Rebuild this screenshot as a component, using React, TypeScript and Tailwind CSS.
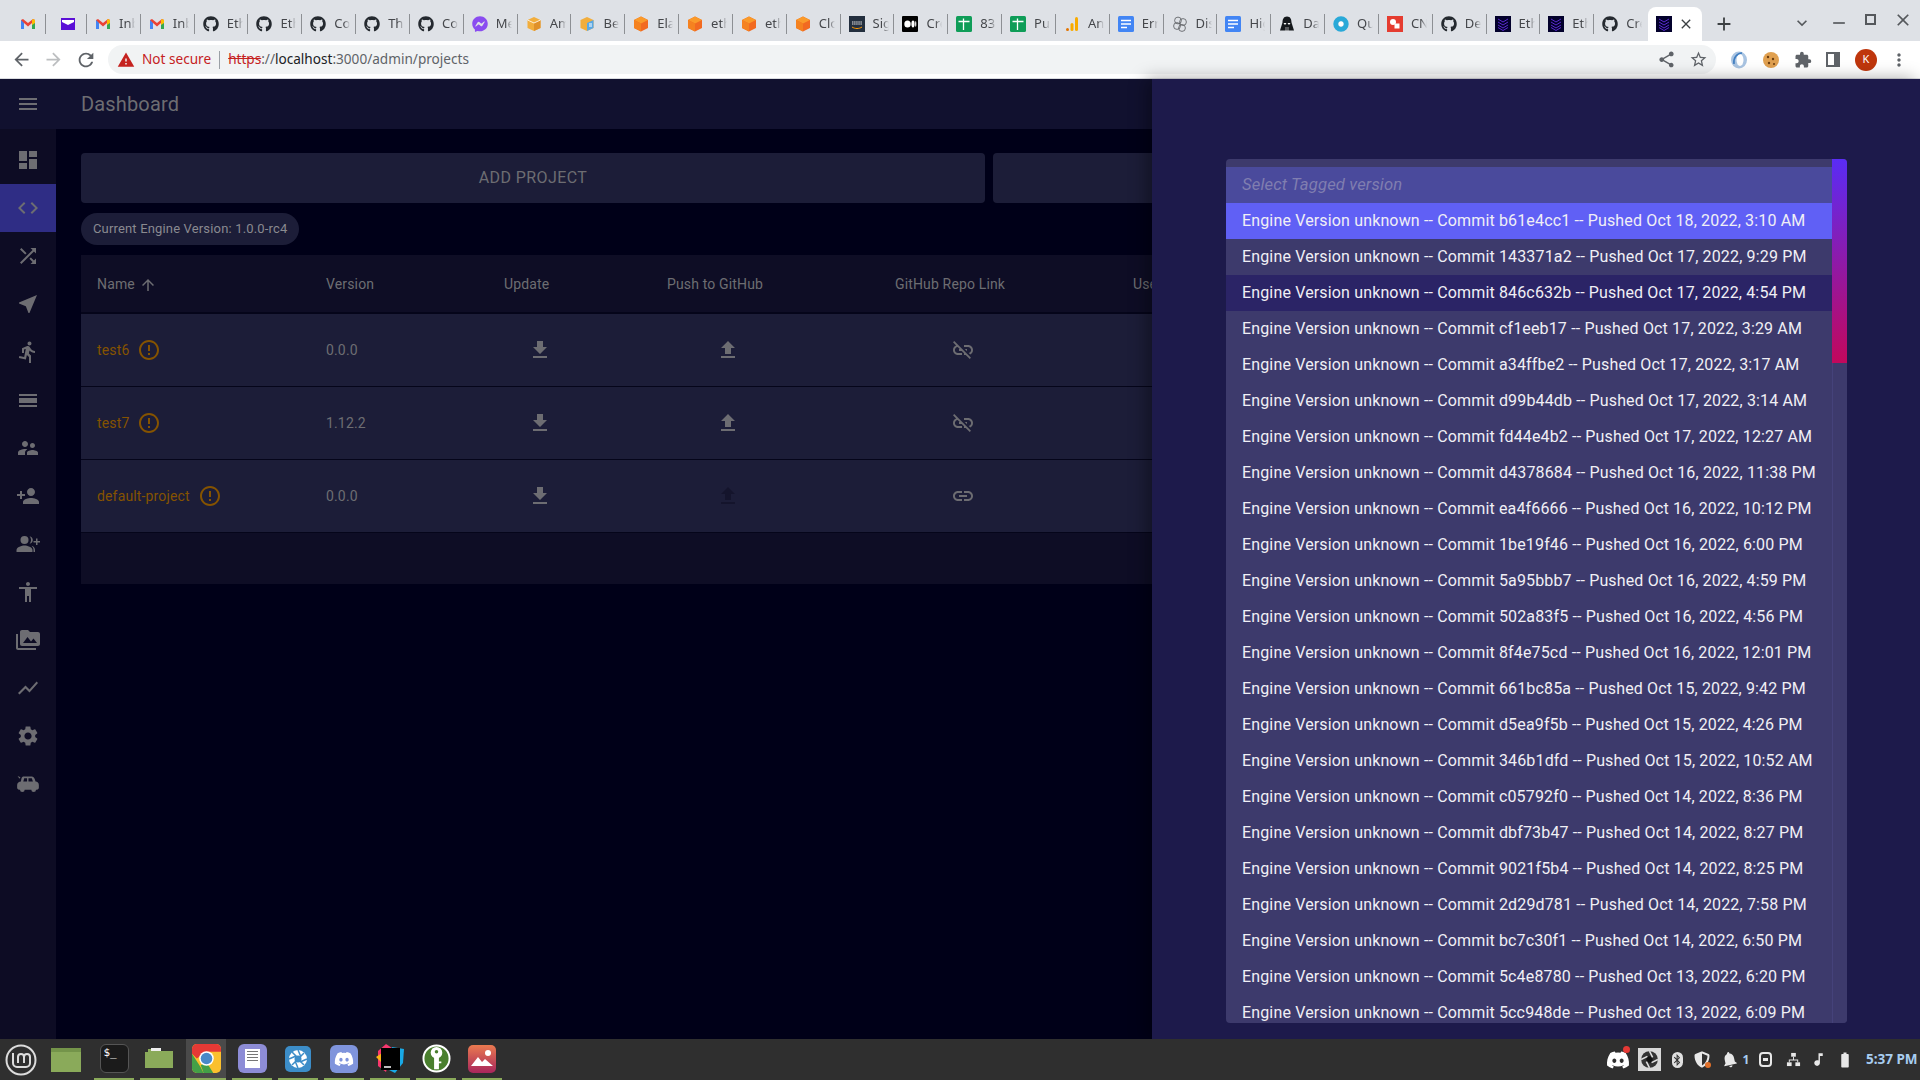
import React from 'react'
import {
  MdAccessibility, MdArrowBack, MdArrowForward, MdArrowUpward, MdCalendarViewDay, MdClose, MdCode, MdDashboard,
  MdDirectionsRun, MdErrorOutline, MdExpandMore, MdExtension, MdFileDownload, MdFileUpload, MdLink,
  MdLinkOff, MdMenu, MdMoreVert, MdNearMe, MdPermMedia, MdPersonAdd, MdRefresh, MdSettings, MdShare, MdShowChart,
  MdShuffle, MdStarBorder, MdSupervisorAccount, MdAdd, MdRemove, MdWarning, MdMusicNote, MdBatteryFull,
  MdNotifications,
} from 'react-icons/md'
import { FaBluetoothB, FaDiscord, FaGithub, FaFacebookMessenger, FaShieldAlt } from 'react-icons/fa'

function Gmail() {
  return (
    <svg viewBox="0 0 16 16" className="w-4 h-4 shrink-0">
      <path d="M1 13V4l2 -1 5 4 5 -4 2 1v9h-3V7L8 10.5 4 7v6z" fill="#ea4335" />
      <path d="M1 13V4l3 3v6z" fill="#4285f4" />
      <path d="M15 13V4l-3 3v6z" fill="#34a853" />
      <path d="M13 3l2 1v3l-3 2V4z" fill="#fbbc04" />
    </svg>
  )
}

function PurpleMail() {
  return (
    <svg viewBox="0 0 16 16" className="w-4 h-4 shrink-0">
      <rect x="1" y="2" width="14" height="12" fill="#5b0fd6" />
      <path d="M2 4h12v2l-6 3-6-3z" fill="#fff" />
    </svg>
  )
}

function Github() {
  return <FaGithub className="w-4 h-4 shrink-0 text-[#24292f]" />
}

function Messenger() {
  return <FaFacebookMessenger className="w-4 h-4 shrink-0 text-[#8a4cf0]" />
}

function AmazonBox() {
  return (
    <svg viewBox="0 0 16 16" className="w-4 h-4 shrink-0">
      <path d="M8 1l6.5 3v8L8 15l-6.5-3V4z" fill="#f2ae3d" />
      <path d="M8 7v8l6.5-3V4z" fill="#e0912a" />
      <path d="M1.5 4L8 7l6.5-3" fill="none" stroke="#fff" strokeWidth="0.8" />
    </svg>
  )
}

function BeBox() {
  return (
    <svg viewBox="0 0 16 16" className="w-4 h-4 shrink-0">
      <path d="M8 1l6.5 3v8L8 15l-6.5-3V4z" fill="#f2ae3d" />
      <path d="M8 7v8l6.5-3V4z" fill="#5aa9e6" />
      <path d="M10 8h3M10 10h3" stroke="#fff" strokeWidth="1" />
    </svg>
  )
}

function OrangeCube() {
  return (
    <svg viewBox="0 0 16 16" className="w-4 h-4 shrink-0">
      <path d="M8 0.5l7 3.5v8l-7 3.5L1 12V4z" fill="#f26a21" />
      <path d="M1 4l7-3.5L15 4 8 7.5z" fill="#fa9a2a" />
      <path d="M8 7.5v8L1 12V4z" fill="#f58220" />
    </svg>
  )
}

function Aws() {
  return (
    <svg viewBox="0 0 16 16" className="w-4 h-4 shrink-0">
      <rect width="16" height="16" fill="#232f3e" />
      <path d="M3 6h10M3 8h10" stroke="#e8e8e8" strokeWidth="1" strokeDasharray="1.5 0.6" />
      <path d="M3 11c3 2 7 2 10 0" stroke="#f90" strokeWidth="1" fill="none" />
    </svg>
  )
}

function Medium() {
  return (
    <svg viewBox="0 0 16 16" className="w-4 h-4 shrink-0">
      <rect width="16" height="16" rx="1" fill="#000" />
      <ellipse cx="5.5" cy="8" rx="3.2" ry="3.6" fill="#fff" />
      <ellipse cx="11" cy="8" rx="1.6" ry="3.4" fill="#fff" />
      <ellipse cx="13.7" cy="8" rx="0.6" ry="3" fill="#fff" />
    </svg>
  )
}

function Sheets() {
  return (
    <svg viewBox="0 0 16 16" className="w-4 h-4 shrink-0">
      <rect width="16" height="16" rx="1.5" fill="#0f9d58" />
      <path d="M2.5 5.5h11M7.5 2.500v11.500" stroke="#fff" strokeWidth="1.3" />
    </svg>
  )
}

function Analytics() {
  return (
    <svg viewBox="0 0 16 16" className="w-4 h-4 shrink-0">
      <rect x="11" y="1" width="3" height="14" rx="1.5" fill="#f9ab00" />
      <rect x="6.5" y="7" width="3" height="8" rx="1.5" fill="#f9ab00" />
      <circle cx="3.5" cy="13.5" r="1.5" fill="#e37400" />
    </svg>
  )
}

function Docs() {
  return (
    <svg viewBox="0 0 16 16" className="w-4 h-4 shrink-0">
      <rect width="16" height="16" rx="1.5" fill="#4285f4" />
      <path d="M3 4.5h10M3 8h10M3 11.5h6" stroke="#fff" strokeWidth="1.4" />
    </svg>
  )
}

function Circles() {
  return (
    <svg viewBox="0 0 16 16" className="w-4 h-4 shrink-0" fill="none" stroke="#55585c" strokeWidth="0.8">
      <circle cx="6" cy="4.5" r="3.4" />
      <circle cx="11" cy="6" r="3.4" />
      <circle cx="5" cy="10" r="3.4" />
      <circle cx="10" cy="12" r="3.4" />
    </svg>
  )
}

function Vader() {
  return (
    <svg viewBox="0 0 16 16" className="w-4 h-4 shrink-0">
      <path d="M8 0.5c3.5 0 4.5 3 4.5 6L15 14.5H1L3.500 6.500C3.500 3.500 4.500 0.500 8 0.500z" fill="#15181c" />
      <path d="M4.500 7h3L6 9zM11.500 7h-3L10 9z" fill="#fff" />
      <path d="M6 12h4M6 14h4" stroke="#fff" strokeWidth="0.6" />
    </svg>
  )
}

function Ring() {
  return (
    <svg viewBox="0 0 16 16" className="w-4 h-4 shrink-0">
      <circle cx="8" cy="8" r="5.200" fill="none" stroke="#29a9d8" strokeWidth="5" />
      <circle cx="8" cy="8" r="2.400" fill="#fff" />
    </svg>
  )
}

function RedSquare() {
  return (
    <svg viewBox="0 0 16 16" className="w-4 h-4 shrink-0">
      <rect width="16" height="16" fill="#e53c30" />
      <circle cx="6" cy="6" r="3" fill="#fff" />
      <rect x="7.500" y="7.500" width="5" height="5" fill="#fff" />
    </svg>
  )
}

function Etherealengine() {
  return (
    <svg viewBox="0 0 16 16" className="w-4 h-4 shrink-0">
      <rect width="16" height="16" fill="#03012c" />
      <path d="M3 3l5 3 5-3M3 6l5 3 5-3M3 9l5 3 5-3M3 11.500l5 3 5-3" fill="none" stroke="#5a2bd0" strokeWidth="1" />
    </svg>
  )
}

function GroupAddRight({ className }: { className?: string }) {
  return (
    <svg viewBox="0 0 24 24" className={className} fill="currentColor">
      <circle cx="8.500" cy="8" r="4" />
      <path d="M0.500 20v-2c0-3 5.300-4.500 8-4.500s8 1.500 8 4.500v2z" />
      <path d="M13.500 4.200c2 .4 3.300 2 3.300 3.800s-1.300 3.400-3.300 3.800c1-1 1.500-2.300 1.500-3.800s-.5-2.800-1.500-3.800z" />
      <path d="M15.500 13.800c2 .6 3.500 2 3.500 4.200v2h-1.500v-2c0-1.700-.7-3.100-2-4.200z" />
      <path d="M20 9V6.500h1.500V9H24v1.500h-2.500V13H20v-2.500h-2.500V9z" />
    </svg>
  )
}

const tabs: { Icon: () => React.JSX.Element; label: string }[] = [
  { Icon: Gmail, label: 'Inbox' },
  { Icon: Gmail, label: 'Inbox' },
  { Icon: Github, label: 'Ethereal' },
  { Icon: Github, label: 'Ethereal' },
  { Icon: Github, label: 'Code' },
  { Icon: Github, label: 'The' },
  { Icon: Github, label: 'Code' },
  { Icon: Messenger, label: 'Messenger' },
  { Icon: AmazonBox, label: 'Amazon' },
  { Icon: BeBox, label: 'Beanstalk' },
  { Icon: OrangeCube, label: 'Elastic' },
  { Icon: OrangeCube, label: 'etherea' },
  { Icon: OrangeCube, label: 'etherea' },
  { Icon: OrangeCube, label: 'Cloud' },
  { Icon: Aws, label: 'Sign' },
  { Icon: Medium, label: 'Create' },
  { Icon: Sheets, label: '83' },
  { Icon: Sheets, label: 'Public' },
  { Icon: Analytics, label: 'Analytics' },
  { Icon: Docs, label: 'Error' },
  { Icon: Circles, label: 'Discord' },
  { Icon: Docs, label: 'High' },
  { Icon: Vader, label: 'Dark' },
  { Icon: Ring, label: 'Quay' },
  { Icon: RedSquare, label: 'CNCF' },
  { Icon: Github, label: 'Dev' },
  { Icon: Etherealengine, label: 'Ethereal' },
  { Icon: Etherealengine, label: 'Ethereal' },
  { Icon: Github, label: 'Create' },
]

const sideIcons = [
  MdDashboard, MdCode, MdShuffle, MdNearMe, MdDirectionsRun, MdCalendarViewDay, MdSupervisorAccount, MdPersonAdd,
  GroupAddRight, MdAccessibility, MdPermMedia, MdShowChart, MdSettings,
]

const commits = [
  ['b61e4cc1', 'Oct 18, 2022, 3:10 AM'],
  ['143371a2', 'Oct 17, 2022, 9:29 PM'],
  ['846c632b', 'Oct 17, 2022, 4:54 PM'],
  ['cf1eeb17', 'Oct 17, 2022, 3:29 AM'],
  ['a34ffbe2', 'Oct 17, 2022, 3:17 AM'],
  ['d99b44db', 'Oct 17, 2022, 3:14 AM'],
  ['fd44e4b2', 'Oct 17, 2022, 12:27 AM'],
  ['d4378684', 'Oct 16, 2022, 11:38 PM'],
  ['ea4f6666', 'Oct 16, 2022, 10:12 PM'],
  ['1be19f46', 'Oct 16, 2022, 6:00 PM'],
  ['5a95bbb7', 'Oct 16, 2022, 4:59 PM'],
  ['502a83f5', 'Oct 16, 2022, 4:56 PM'],
  ['8f4e75cd', 'Oct 16, 2022, 12:01 PM'],
  ['661bc85a', 'Oct 15, 2022, 9:42 PM'],
  ['d5ea9f5b', 'Oct 15, 2022, 4:26 PM'],
  ['346b1dfd', 'Oct 15, 2022, 10:52 AM'],
  ['c05792f0', 'Oct 14, 2022, 8:36 PM'],
  ['dbf73b47', 'Oct 14, 2022, 8:27 PM'],
  ['9021f5b4', 'Oct 14, 2022, 8:25 PM'],
  ['2d29d781', 'Oct 14, 2022, 7:58 PM'],
  ['bc7c30f1', 'Oct 14, 2022, 6:50 PM'],
  ['5c4e8780', 'Oct 13, 2022, 6:20 PM'],
  ['5cc948de', 'Oct 13, 2022, 6:09 PM'],
]

const projects = [
  { name: 'test6', version: '0.0.0', pushOff: false, linked: false },
  { name: 'test7', version: '1.12.2', pushOff: false, linked: false },
  { name: 'default-project', version: '0.0.0', pushOff: true, linked: true },
]

const tableCols = 'grid grid-cols-[229px_178px_163px_228px_238px_1fr]'

function TabStrip() {
  return (
    <div className="h-[41px] bg-[#dee1e6] flex items-end pl-2 relative shrink-0">
      <div className="h-[34px] w-[39px] flex items-center pl-3 pb-[1px] border-r border-transparent relative">
        <Gmail />
        <span className="absolute right-0 top-[7px] h-5 w-px bg-[#8d9094]" />
      </div>
      <div className="h-[34px] w-[40px] flex items-center pl-[13px] pb-[1px] relative">
        <PurpleMail />
        <span className="absolute right-0 top-[7px] h-5 w-px bg-[#8d9094]" />
      </div>
      {tabs.map((t, i) => (
        <div key={i} className="h-[34px] w-[53.84px] flex items-center pl-2 pb-[1px] relative">
          <t.Icon />
          <span className="ml-2 w-[16px] overflow-hidden whitespace-nowrap text-[13px] text-[#45474b] [mask-image:linear-gradient(90deg,#000_60%,transparent)]">
            {t.label}
          </span>
          {i < tabs.length - 1 && <span className="absolute right-0 top-[7px] h-5 w-px bg-[#8d9094]" />}
        </div>
      ))}
      <div className="h-[34px] w-[54px] bg-white rounded-t-lg flex items-center pl-2 gap-[6px] pb-[1px]">
        <Etherealengine />
        <MdClose className="w-4 h-4 text-[#3c4043]" />
      </div>
      <MdAdd className="ml-[11px] mb-[6px] w-[22px] h-[22px] text-[#3c4043]" />
      <MdExpandMore className="ml-[57px] mb-[8px] w-5 h-5 text-[#55585c]" />
      <MdRemove className="ml-[17px] mb-[8px] w-5 h-5 text-[#55585c]" />
      <div className="ml-[16px] mb-[16px] w-[11px] h-[11px] border-2 border-[#55585c]" />
      <MdClose className="ml-[17px] mb-[11px] w-5 h-5 text-[#55585c]" />
    </div>
  )
}

function Toolbar() {
  return (
    <div className="h-[38px] bg-white border-b border-[#dadce0] flex items-center shrink-0 font-['Noto_Sans',sans-serif]">
      <div className="w-[108px] flex items-center pl-[11px] gap-[11px] text-[#5f6368]">
        <MdArrowBack className="w-[21px] h-[21px]" />
        <MdArrowForward className="w-[21px] h-[21px] text-[#bcbec0]" />
        <MdRefresh className="w-[22px] h-[22px]" />
      </div>
      <div className="w-[1608px] h-[29px] rounded-full bg-[#f1f3f4] flex items-center pl-[9px] text-[13.6px] relative">
        <MdWarning className="w-[18px] h-[18px] text-[#c5221f]" />
        <span className="ml-[7px] text-[#c5221f]">Not secure</span>
        <span className="ml-2 mr-2 w-px h-[18px] bg-[#9aa0a6]" />
        <span className="text-[#c5221f] line-through">https</span>
        <span className="text-[#5f6368]">://</span>
        <span className="text-[#202124]">localhost</span>
        <span className="text-[#5f6368]">:3000/admin/projects</span>
        <div className="absolute right-[8px] top-[5px] flex gap-[13px] text-[#5f6368]">
          <MdShare className="w-[19px] h-[19px]" />
          <MdStarBorder className="w-[19px] h-[19px]" />
        </div>
      </div>
      <div className="flex items-center ml-[14px] gap-[14px] text-[#5f6368]">
        <svg viewBox="0 0 18 18" className="w-[18px] h-[18px]">
          <ellipse cx="9" cy="9" rx="8" ry="8.500" fill="#a9c4e2" />
          <ellipse cx="10" cy="9" rx="3.500" ry="6" fill="#fff" />
          <path d="M4 13C3 7 7 2 12 2" stroke="#3d7cc0" strokeWidth="1.500" fill="none" />
        </svg>
        <svg viewBox="0 0 18 18" className="w-[18px] h-[18px]">
          <circle cx="9" cy="9" r="8" fill="#e0a050" />
          <circle cx="6" cy="6" r="1.200" fill="#6b3d10" />
          <circle cx="11" cy="8" r="1.200" fill="#6b3d10" />
          <circle cx="7" cy="12" r="1.200" fill="#6b3d10" />
          <circle cx="12" cy="13" r="1" fill="#6b3d10" />
        </svg>
        <MdExtension className="w-[18px] h-[18px]" />
        <div className="w-[14px] h-[15px] border-2 border-[#5f6368] border-r-[6px]" />
        <div className="ml-[1px] w-[22px] h-[22px] rounded-full bg-[#bf360c] text-white text-[11px] flex items-center justify-center">K</div>
        <MdMoreVert className="-ml-[2px] w-5 h-5" />
      </div>
    </div>
  )
}

function Sidebar() {
  return (
    <div className="w-[56px] shrink-0 bg-[#0d0c24] pt-[7px] flex flex-col">
      {sideIcons.map((Icon, i) => (
        <div key={i} className={`h-12 flex items-center justify-center text-[#6d6d72] ${i === 1 ? 'bg-[#2f2d85]' : ''}`}>
          <Icon className="w-6 h-6" />
        </div>
      ))}
      <div className="h-12 flex items-center justify-center pb-[2px]">
        <svg viewBox="0 0 24 18" className="w-[24px] h-[17px]" fill="#6d6d72">
          <path d="M1 1l3 1.500-1 1.500z" />
          <path d="M7 1.500h9c1.500 0 2.500 1 3 2.500l1 3c2 .3 3.500 1.500 3.500 3.500v3c0 1.200-1 2-2 2h-1a2.500 2.500 0 0 1-5 0H8.500a2.500 2.500 0 0 1-5 0h-1c-1 0-2-.8-2-2v-3C.5 8.500 2.500 7.300 4.500 7l.5-3c.2-1.500 1-2.500 2-2.500z" />
          <path d="M8 3.500h3V7H7zM12.500 3.500H16l1.200 3.500h-4.700z" fill="#0d0c24" />
        </svg>
      </div>
    </div>
  )
}

function ProjectTable() {
  return (
    <div className="mt-[10px] text-[14px] tracking-[0.15px] text-[#6d6d72]">
      <div className={`${tableCols} h-[59px] pt-[2px] items-center bg-[#0e0d25] border-b-2 border-[#05051a]`}>
        <div className="pl-4 flex items-center gap-1">Name <MdArrowUpward className="w-[18px] h-[18px]" /></div>
        <div className="pl-4">Version</div>
        <div className="pl-4">Update</div>
        <div className="pl-4">Push to GitHub</div>
        <div className="pl-4">GitHub Repo Link</div>
        <div className="pl-4">User</div>
      </div>
      {projects.map((p) => (
        <div key={p.name} className={`${tableCols} h-[73px] items-center bg-[#1c1d38] border-b border-[#05051a]`}>
          <div className="pl-4 flex items-center gap-2 text-[#855300]">
            {p.name}
            <MdErrorOutline className="w-6 h-6" />
          </div>
          <div className="pl-4">{p.version}</div>
          <div className="pl-[40px]"><MdFileDownload className="w-6 h-6" /></div>
          <div className="pl-[65px]">
            <MdFileUpload className={`w-6 h-6 ${p.pushOff ? 'text-[#14142c]' : ''}`} />
          </div>
          <div className="pl-[72px]">
            {p.linked ? <MdLink className="w-6 h-6" /> : <MdLinkOff className="w-6 h-6" />}
          </div>
          <div />
        </div>
      ))}
      <div className="h-[51px] bg-[#0e0d25]" />
    </div>
  )
}

function VersionDrawer() {
  return (
    <div className="absolute left-[1152px] right-0 top-0 bottom-0 bg-[#1d1a4b] pl-[74px] pr-[73px] pt-[80px] pb-[16px] shadow-[-6px_0_16px_rgba(0,0,0,0.35)]">
      <div className="h-full bg-[#3d3a6c] rounded flex overflow-hidden">
        <div className="flex-1 pt-2 overflow-hidden text-[16px] tracking-[0.15px] text-[#f0eff5]">
          <div className="h-9 bg-[#4a4a9c] pl-[16px] flex items-center italic text-[16.6px] text-[#807eb0]">Select Tagged version</div>
          {commits.map(([hash, date], i) => (
            <div
              key={hash}
              className={`h-9 pl-[16px] flex items-center whitespace-nowrap ${i === 0 ? 'bg-[#6060f5]' : i === 2 ? 'bg-[#2b2466]' : ''}`}
            >
              Engine Version unknown -- Commit {hash} -- Pushed {date}
            </div>
          ))}
        </div>
        <div className="w-[15px] shrink-0 bg-[#3d3a6c] border-l border-[#45427a]">
          <div className="h-[204px] -ml-px bg-[linear-gradient(180deg,#5a2cf5,#c2085c)]" />
        </div>
      </div>
    </div>
  )
}

function Dock({ active, children }: { active?: boolean; children: React.ReactNode }) {
  return (
    <div className={`w-[40px] h-[41px] flex items-center justify-center relative ${active ? 'bg-[#4a4a4a]' : ''}`}>
      {children}
      <span className="absolute left-0 right-0 bottom-0 h-[2px] bg-[#8aaa5a]" />
    </div>
  )
}

function Taskbar() {
  return (
    <div className="h-[41px] bg-[#2f2f2f] flex items-center shrink-0 relative">
      <svg viewBox="0 0 32 32" className="ml-[5px] w-[32px] h-[32px]" fill="none" stroke="#dcdcdc">
        <circle cx="16" cy="16" r="14.500" strokeWidth="2" />
        <path d="M8 9v10a4 4 0 0 0 4 4h9a4 4 0 0 0 4-4v-6a3 3 0 0 0-6 0v6M13 19v-6a3 3 0 0 1 6 0" strokeWidth="2" />
      </svg>
      <div className="ml-[14px] w-[30px] h-[24px] bg-[#8aaa5a] border-t-4 border-[#74944a] shrink-0" />
      <div className="ml-[13px] flex gap-[6px] shrink-0">
        <Dock>
          <div className="w-[29px] h-[29px] bg-[#1b1b1b] rounded-md border border-[#555] text-[11px] leading-[16px] text-white font-['DejaVu_Sans_Mono',monospace] pl-[3px] mb-[2px]">$_</div>
        </Dock>
        <Dock>
          <svg viewBox="0 0 30 24" className="w-[30px] h-[24px] mb-[3px]">
            <path d="M3 3h10l2 2h13v17H0V6h3z" fill="#8aaa5a" />
            <path d="M6 2h10v3H6z" fill="#eee" />
          </svg>
        </Dock>
        <Dock active>
          <svg viewBox="0 0 30 30" className="w-[29px] h-[29px] mb-[2px]">
            <rect width="30" height="30" rx="5" fill="#fbc02d" />
            <path d="M5 0h20a5 5 0 0 1 5 5v3H15L5 15 0 10V5a5 5 0 0 1 5-5z" fill="#e53935" />
            <path d="M0 10l9 14 3 6H5a5 5 0 0 1-5-5z" fill="#43a047" />
            <path d="M9 22l6-3 7 11H12z" fill="#43a047" />
            <circle cx="15" cy="15" r="7.500" fill="#fff" />
            <circle cx="15" cy="15" r="6" fill="#4a89c8" />
          </svg>
        </Dock>
        <Dock>
          <div className="w-[29px] h-[29px] bg-[#8d8cd6] rounded-md flex items-center justify-center mb-[2px]">
            <div className="w-[15px] h-[19px] bg-white flex flex-col gap-[2px] p-[2px]">
              <span className="h-px bg-[#777]" /><span className="h-px bg-[#777]" /><span className="h-px bg-[#777]" /><span className="h-px bg-[#777]" />
            </div>
          </div>
        </Dock>
        <Dock>
          <svg viewBox="0 0 26 26" className="w-[26px] h-[26px] mb-[2px]">
            <rect width="26" height="26" rx="5" fill="#3c8dc8" />
            <circle cx="13" cy="13" r="9" fill="#fff" />
            <circle cx="13" cy="13" r="3.500" fill="#3c8dc8" />
            <path d="M13 4l3 7M22 13l-7 3M13 22l-3-7M4 13l7-3M7 6l5 5M19 7l-5 5M19 19l-5-5M7 19l5-5" stroke="#3c8dc8" strokeWidth="1.500" />
          </svg>
        </Dock>
        <Dock>
          <div className="w-[28px] h-[28px] rounded-md bg-[#7f94dc] flex items-center justify-center mb-[2px]">
            <FaDiscord className="w-5 h-5 text-white" />
          </div>
        </Dock>
        <Dock>
          <svg viewBox="0 0 32 32" className="w-[32px] h-[32px] mb-[2px]">
            <path d="M4 8l8-7 6 4-6 24-8-6z" fill="#f9376e" />
            <path d="M18 4l12 2-1 14-8 10-8-4z" fill="#19a9e6" />
            <path d="M2 14l6-4v10z" fill="#fcb415" />
            <rect x="7" y="5" width="19" height="22" fill="#000" />
            <path d="M10 24h7" stroke="#fff" strokeWidth="1.500" />
          </svg>
        </Dock>
        <Dock>
          <svg viewBox="0 0 30 30" className="w-[29px] h-[29px] mb-[2px]">
            <circle cx="15" cy="15" r="13.500" fill="#4a7f2e" stroke="#fff" strokeWidth="2" />
            <circle cx="15" cy="9" r="6" fill="#fff" />
            <path d="M12.500 12h5v14h-5zM17 18h3v2h-3z" fill="#fff" />
            <circle cx="15" cy="8" r="1.800" fill="#4a7f2e" />
          </svg>
        </Dock>
        <Dock>
          <svg viewBox="0 0 28 28" className="w-[28px] h-[28px] mb-[2px]">
            <defs>
              <linearGradient id="ph" x1="0" y1="0" x2="0" y2="1">
                <stop offset="0" stopColor="#ea7a50" />
                <stop offset="1" stopColor="#a8265c" />
              </linearGradient>
            </defs>
            <rect width="28" height="28" rx="5" fill="url(#ph)" />
            <circle cx="20" cy="8" r="3" fill="#fff" />
            <path d="M3 21l7-9 4 5 3-3 8 7z" fill="#fff" />
          </svg>
        </Dock>
      </div>
      <div className="absolute right-[5px] top-0 h-full flex items-center text-[#e8e8e8]">
        <div className="w-[32px] flex justify-center">
          <div className="relative">
            <FaDiscord className="w-[24px] h-[24px] text-white" />
            <span className="absolute -top-[2px] right-0 w-[7px] h-[7px] rounded-full bg-[#e53935]" />
          </div>
        </div>
        <div className="w-[30px] flex justify-center">
          <svg viewBox="0 0 22 22" className="w-[23px] h-[23px]">
            <rect width="22" height="22" fill="#d8d8d8" />
            <circle cx="11" cy="11" r="8" fill="#333" />
            <circle cx="11" cy="11" r="3" fill="#111" />
            <path d="M11 3l3 6M19 11l-6 3M11 19l-3-6M3 11l6-3" stroke="#ddd" strokeWidth="1.500" />
          </svg>
        </div>
        <div className="w-[26px] flex justify-center">
          <div className="w-[11px] h-[16px] rounded-full bg-[#e0e0e0] flex items-center justify-center">
            <FaBluetoothB className="w-[10px] h-[12px] text-[#2f2f2f]" />
          </div>
        </div>
        <div className="w-[24px] flex justify-center">
          <div className="relative">
            <FaShieldAlt className="w-[16px] h-[17px]" />
            <span className="absolute bottom-0 -right-[1px] w-[6px] h-[6px] rounded-full bg-[#e0702a]" />
          </div>
        </div>
        <div className="w-[30px] flex justify-center">
          <MdNotifications className="w-[19px] h-[19px] -rotate-12" />
        </div>
        <span className="w-[4px] flex justify-center text-[12px] font-bold text-[#a8cdf0] font-['Noto_Sans',sans-serif]">1</span>
        <div className="w-[34px] flex justify-center">
          <div className="w-[13px] h-[15px] border-2 border-[#e8e8e8] rounded-sm flex items-center justify-center">
            <span className="w-[5px] h-[3px] bg-[#e8e8e8]" />
          </div>
        </div>
        <div className="w-[22px] flex justify-center">
          <svg viewBox="0 0 16 16" className="w-[15px] h-[15px]" fill="#e8e8e8">
            <rect x="5.500" y="1" width="5" height="4" />
            <rect x="1" y="11" width="5" height="4" />
            <rect x="10" y="11" width="5" height="4" />
            <path d="M7.500 5h1v3H13v3h-1V9H4v2H3V8h4.500z" />
          </svg>
        </div>
        <div className="w-[28px] flex justify-center">
          <MdMusicNote className="w-[17px] h-[17px]" />
        </div>
        <div className="w-[26px] flex justify-center">
          <MdBatteryFull className="w-[18px] h-[18px]" />
        </div>
        <span className="ml-2 w-[49px] whitespace-nowrap text-[13.5px] font-bold text-[#a8cdf0] font-['Noto_Sans',sans-serif]">5:37 PM</span>
      </div>
    </div>
  )
}

export default function App() {
  return (
    <div className="h-screen w-screen overflow-hidden flex flex-col font-['Noto_Sans',sans-serif]">
      <TabStrip />
      <Toolbar />
      <div className="flex-1 min-h-0 relative bg-[#000018] flex flex-col font-['Roboto',sans-serif]">
        <div className="h-[50px] bg-[#11112f] shrink-0 flex items-center text-[#6d6d72]">
          <MdMenu className="ml-4 w-6 h-6" />
          <span className="ml-[41px] text-[20px] tracking-[0.15px]">Dashboard</span>
        </div>
        <div className="flex-1 min-h-0 flex">
          <Sidebar />
          <div className="flex-1 pl-[25px] pr-[23px] pt-[24px]">
            <div className="grid grid-cols-2 gap-2">
              <div className="h-[50px] rounded bg-[#1c1d38] flex items-center justify-center text-[16px] tracking-[0.4px] text-[#6d6d72]">ADD PROJECT</div>
              <div className="h-[50px] rounded bg-[#1c1d38]" />
            </div>
            <div className="mt-[10px] h-[32px] w-[218px] rounded-full bg-[#1c1d38] text-[13px] tracking-[0.16px] text-[#8a8a90] flex items-center pl-3 whitespace-nowrap">
              Current Engine Version: 1.0.0-rc4
            </div>
            <ProjectTable />
          </div>
        </div>
        <VersionDrawer />
      </div>
      <Taskbar />
    </div>
  )
}
